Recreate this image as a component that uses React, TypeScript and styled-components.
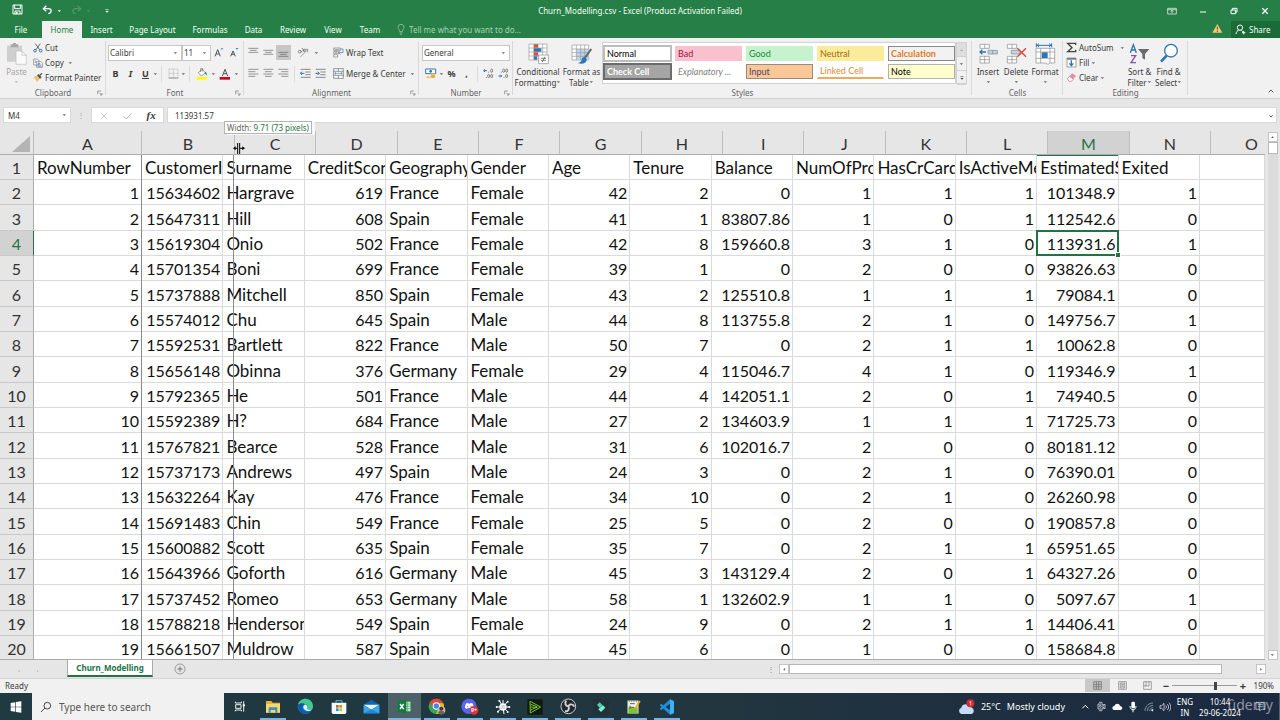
import React from "react";
import styled, { createGlobalStyle, css } from "styled-components";

const green = "#267f46";
const uiFont = `"Noto Sans", "Open Sans", sans-serif`;
const cellFont = `Lato, "Open Sans", sans-serif`;

const GlobalStyle = createGlobalStyle`
  * { box-sizing: border-box; }
  body { margin: 0; font-family: ${uiFont}; font-size: 8px; color: #3a3a3a; background: #e6e6e6; }
  button, input, select { font: inherit; color: inherit; }
  button { border: 0; padding: 0; background: none; cursor: pointer; }
`;

const Shell = styled.div`
  display: flex;
  flex-direction: column;
  height: 100vh;
  overflow: hidden;
`;

/* ---------- title bar and tabs ---------- */
const TitleBar = styled.header`
  display: grid;
  grid-template-columns: 1fr auto 1fr;
  align-items: center;
  height: 21px;
  background: ${green};
  color: #f2fff5;
`;
const QuickAccess = styled.div`
  display: flex;
  align-items: center;
  gap: 4px;
  padding-left: 12px;
`;
const Space = styled.span<{ $wide: number }>`
  width: ${(p) => p.$wide}px;
`;
const Title = styled.h1`
  margin: 0;
  font-size: 8px;
  font-weight: 400;
  white-space: nowrap;
`;
const WindowButtons = styled.div`
  display: flex;
  justify-content: flex-end;
`;
const WindowButton = styled.button`
  display: grid;
  place-items: center;
  width: 31px;
  height: 21px;
`;
const TabBar = styled.nav`
  display: flex;
  align-items: stretch;
  height: 17px;
  background: ${green};
  color: #f2fff5;
`;
const Tab = styled.button<{ $active?: boolean; $wide: number }>`
  width: ${(p) => p.$wide}px;
  line-height: 17px;
  white-space: nowrap;
  ${(p) => p.$active && css`background: #f1f1f1; color: ${green};`}
`;
const TellMe = styled.label`
  display: flex;
  align-items: center;
  gap: 4px;
  flex: 1;
  padding-left: 8px;
  color: #a6d3b4;
`;
const TellMeInput = styled.input`
  width: 160px;
  padding: 0;
  border: 0;
  outline: 0;
  background: none;
  &::placeholder { color: #a6d3b4; opacity: 1; }
`;
const ShareButton = styled.button`
  display: flex;
  align-items: center;
  gap: 3px;
  width: 49px;
  margin-left: 8px;
  padding-left: 4px;
  background: #1a6b37;
`;

/* ---------- ribbon ---------- */
const Ribbon = styled.section`
  display: flex;
  height: 61px;
  background: #f1f1f1;
  border-bottom: 1px solid #d2d2d2;
`;
const GroupBox = styled.section<{ $wide: number }>`
  display: flex;
  flex-direction: column;
  width: ${(p) => p.$wide}px;
  flex: none;
  padding-top: 2px;
  background: linear-gradient(#d8d8d8, #d8d8d8) right 3px / 1px 54px no-repeat;
`;
const GroupBody = styled.div`
  display: flex;
  height: 48px;
`;
const GroupLabel = styled.footer`
  display: grid;
  grid-template-columns: 12px 1fr 12px;
  align-items: center;
  text-align: center;
  line-height: 11px;
  color: #666;
`;
const Stack = styled.div<{ $left?: number }>`
  display: flex;
  flex-direction: column;
  padding-left: ${(p) => p.$left ?? 0}px;
`;
const ToolRow = styled.div`
  display: flex;
  align-items: center;
  height: 21px;
`;
const TallRows = styled(Stack)`
  padding-top: 2px;
`;
const LabelButton = styled.button`
  display: flex;
  align-items: center;
  gap: 2px;
  height: 15px;
  white-space: nowrap;
`;
const IconButton = styled.button<{ $wide?: number; $on?: boolean }>`
  display: grid;
  place-items: center;
  width: ${(p) => p.$wide ?? 15}px;
  height: 15px;
  flex: none;
  background: ${(p) => (p.$on ? "#c6c6c6" : "none")};
`;
const GlyphButton = styled(IconButton)`
  font-size: 9px;
  line-height: 15px;
  font-weight: 700;
`;
const FunctionButton = styled(GlyphButton)`
  font-family: "Liberation Serif", serif;
  font-size: 11px;
  font-style: italic;
`;
const BigButton = styled.button<{ $wide: number; $dim?: boolean }>`
  display: flex;
  flex-direction: column;
  align-items: center;
  width: ${(p) => p.$wide}px;
  padding-top: 1px;
  line-height: 11px;
  white-space: nowrap;
  color: ${(p) => (p.$dim ? "#a3a3a3" : "inherit")};
`;
const BigIcon = styled.span`
  display: grid;
  place-items: center;
  height: 25px;
`;
const BigLine = styled.span`
  display: flex;
  align-items: center;
  justify-content: center;
  height: 10px;
`;
const Rule = styled.span`
  width: 1px;
  height: 16px;
  margin: 0 3px;
  background: #dcdcdc;
`;
const SelectWrap = styled.span<{ $wide: number }>`
  display: grid;
  grid-template-columns: 1fr 8px;
  align-items: center;
  width: ${(p) => p.$wide}px;
  height: 16px;
  border: 1px solid #c6c6c6;
  background: #fff;
`;
const SelectBox = styled.select`
  grid-area: 1 / 1 / 2 / 3;
  width: 100%;
  height: 14px;
  padding: 0 1px;
  border: 0;
  appearance: none;
  background: none;
`;
const CaretSlot = styled.span`
  grid-area: 1 / 2;
  display: grid;
  pointer-events: none;
`;
const Gallery = styled.div`
  display: grid;
  grid-template-columns: repeat(5, 67px);
  grid-auto-rows: 15px;
  gap: 3px 4px;
  width: 354px;
  height: 42px;
  margin-top: 2px;
  padding: 3px 1px;
  background: #fff;
  border: 1px solid #d2d2d2;
`;
type ChipLook = { $bg?: string; $fg?: string; $edge?: string; $bold?: boolean; $italic?: boolean; $under?: boolean; $picked?: boolean };
const StyleChip = styled.button<ChipLook>`
  padding: 0 2px;
  overflow: hidden;
  text-align: left;
  line-height: 12px;
  white-space: nowrap;
  font-size: 9px;
  font-family: ${cellFont};
  background: ${(p) => p.$bg ?? "#fff"};
  color: ${(p) => p.$fg ?? "#000"};
  border: 1px solid ${(p) => p.$edge ?? "transparent"};
  font-weight: ${(p) => (p.$bold ? 700 : 400)};
  font-style: ${(p) => (p.$italic ? "italic" : "normal")};
  ${(p) => p.$under && css`border-bottom: 2px solid #f0a860;`}
  ${(p) => p.$picked && css`outline: 1px solid ${p.$edge};`}
`;
const GalleryScroll = styled.div`
  display: grid;
  grid-template-rows: repeat(3, 14px);
  width: 11px;
  margin-top: 2px;
  border: 1px solid #d2d2d2;
  height: 42px;
  > button { display: grid; place-items: center; border-bottom: 1px solid #d2d2d2; }
  > button:first-child { background: #dedede; }
`;
const CollapseArea = styled.div`
  display: flex;
  flex: 1;
  justify-content: flex-end;
  align-items: flex-end;
  padding-right: 4px;
`;

/* ---------- formula bar ---------- */
const FormulaBar = styled.section`
  display: flex;
  align-items: flex-start;
  height: 32px;
  padding: 8px 3px 0;
  background: #e6e6e6;
`;
const NameBox = styled.label`
  display: flex;
  align-items: center;
  width: 68px;
  height: 16px;
  padding: 0 3px 0 4px;
  background: #fff;
  border: 1px solid #d9d9d9;
`;
const PlainInput = styled.input`
  flex: 1;
  min-width: 0;
  padding: 0;
  border: 0;
  outline: 0;
  background: none;
`;
const Dots = styled.span`
  width: 20px;
  text-align: center;
  line-height: 15px;
  color: #999;
`;
const FormulaTools = styled.div`
  display: flex;
  justify-content: space-around;
  width: 73px;
  height: 16px;
  margin-right: 3px;
  background: #fff;
  border: 1px solid #d9d9d9;
`;
const FormulaField = styled.label`
  display: flex;
  align-items: center;
  flex: 1;
  height: 16px;
  padding: 0 2px 0 7px;
  background: #fff;
  border: 1px solid #d9d9d9;
`;

/* ---------- sheet ---------- */
const SheetArea = styled.main`
  display: flex;
  flex: 1;
  min-height: 0;
  background: #e6e6e6;
`;
const Sheet = styled.div`
  position: relative;
  flex: 1;
  min-width: 0;
  overflow: hidden;
  border-bottom: 1px solid #ababab;
  font-family: ${cellFont};
  font-size: 16px;
`;
const Grid = styled.table`
  width: 100%;
  table-layout: fixed;
  border-collapse: separate;
  border-spacing: 0;
`;
const ColHead = styled.th<{ $on?: boolean }>`
  height: 24px;
  padding: 2px 0 0;
  overflow: hidden;
  line-height: 21px;
  font-weight: 400;
  color: ${(p) => (p.$on ? "#217346" : "#333")};
  background: ${(p) => (p.$on ? "#d2d2d2" : "#e6e6e6")};
  border-right: 1px solid #bdbdbd;
  border-bottom: 1px solid #ababab;
  &:last-child { padding-left: 27px; border-right: 0; }
`;
const Corner = styled(ColHead)`
  padding: 0;
  > svg { display: block; margin: 3px 2px 0 auto; }
`;
const BodyRow = styled.tr`
  height: 25px;
  &:nth-child(3n) { height: 26px; }
`;
const RowHead = styled.th<{ $on?: boolean }>`
  padding: 2px 0 0;
  line-height: 22px;
  font-weight: 400;
  color: ${(p) => (p.$on ? "#217346" : "#333")};
  background: ${(p) => (p.$on ? "#d2d2d2" : "#e6e6e6")};
  border-right: 1px solid ${(p) => (p.$on ? "#217346" : "#ababab")};
  border-bottom: 1px solid #c9c9c9;
`;
const Cell = styled.td<{ $num?: boolean; $marked?: boolean }>`
  padding: 2px 2px 0 3px;
  overflow: hidden;
  white-space: nowrap;
  font-size: ${(p) => (p.$num ? 16 : 17)}px;
  line-height: 22px;
  color: #111;
  text-align: ${(p) => (p.$num ? "right" : "left")};
  background: #fff;
  border-right: 1px solid #dadada;
  border-bottom: 1px solid #dadada;
  ${(p) => p.$marked && css`box-shadow: inset 0 1px 0 #217346;`}
`;
const ActiveCell = styled(Cell)`
  position: relative;
  overflow: visible;
  &::before {
    content: "";
    position: absolute;
    inset: -1px -1px -1px -1px;
    border: 2px solid #217346;
  }
  &::after {
    content: "";
    position: absolute;
    right: -2px;
    bottom: -2px;
    width: 4px;
    height: 4px;
    background: #217346;
    outline: 1px solid #fff;
  }
`;
const Guide = styled.span<{ $x: number }>`
  position: absolute;
  left: ${(p) => p.$x}px;
  top: 24px;
  bottom: 0;
  width: 1px;
  background: #8a8a8a;
`;
const Pointer = styled.svg`
  position: absolute;
  left: 233px;
  top: 12px;
`;
const WidthTip = styled.div`
  position: absolute;
  z-index: 1;
  left: 224px;
  top: 121px;
  padding: 0 2px;
  line-height: 11px;
  white-space: nowrap;
  background: #fff;
  border: 1px solid #b5b5b5;
  box-shadow: 3px 1px 0 #f7f7f7;
  color: #666;
  > b { font-weight: 400; color: #217346; }
`;
const VScroll = styled.div`
  display: flex;
  flex-direction: column;
  align-items: center;
  width: 15px;
  padding: 1px 0 0;
`;
const ScrollButton = styled.button`
  display: grid;
  place-items: center;
  flex: none;
  width: 10px;
  height: 10px;
  background: #fff;
  border: 1px solid #c4c4c4;
`;
const VTrack = styled.div`
  flex: 1;
  width: 10px;
  background: #dcdcdc;
`;
const VThumb = styled.div`
  height: 12px;
  background: #fff;
  border: 1px solid #b8b8b8;
`;

/* ---------- sheet tabs and status ---------- */
const SheetBar = styled.nav`
  display: flex;
  align-items: center;
  height: 19px;
  background: #e6e6e6;
  border-bottom: 1px solid #d2d2d2;
`;
const SheetArrows = styled.div`
  display: flex;
  justify-content: space-around;
  width: 67px;
  padding: 0 20px 0 10px;
`;
const SheetTab = styled.button`
  align-self: flex-start;
  width: 86px;
  height: 17px;
  background: #fff;
  border: 1px solid #ababab;
  border-top: 0;
  border-bottom: 2px solid #217346;
  color: #217346;
  font-weight: 700;
`;
const AddSheet = styled.button`
  display: grid;
  margin-left: 21px;
`;
const HScroll = styled.div`
  display: flex;
  flex: none;
  align-items: center;
  width: 39%;
  margin: 0 14px 0 auto;
`;
const Grip = styled.span`
  width: 12px;
  line-height: 10px;
  color: #888;
`;
const HTrack = styled.div`
  flex: 1;
  padding-right: 34px;
`;
const HThumb = styled.div`
  height: 10px;
  background: #fff;
  border: 1px solid #b8b8b8;
`;
const StatusBar = styled.footer`
  display: flex;
  align-items: center;
  height: 14px;
  padding: 0 6px 1px 5px;
  background: #f1f1f1;
`;
const StatusTools = styled.div`
  display: flex;
  align-items: center;
  margin-left: auto;
`;
const ViewButton = styled.button<{ $on?: boolean }>`
  display: grid;
  place-items: center;
  width: 25px;
  height: 13px;
  background: ${(p) => (p.$on ? "#c9c9c9" : "none")};
`;
const ZoomStep = styled.button`
  width: 12px;
  font-size: 11px;
  line-height: 12px;
  font-weight: 700;
`;
const ZoomRange = styled.input`
  width: 65px;
  height: 12px;
  margin: 0;
  appearance: none;
  background: linear-gradient(#9a9a9a, #9a9a9a) center / 100% 1px no-repeat;
  &::-webkit-slider-thumb { appearance: none; width: 3px; height: 8px; background: #444; }
`;
const ZoomValue = styled.span`
  width: 25px;
  text-align: right;
`;

/* ---------- taskbar ---------- */
const Taskbar = styled.footer`
  display: flex;
  height: 27px;
  background: linear-gradient(90deg, #203a41, #21363f 55%, #1b2942);
  color: #fff;
`;
const StartButton = styled.button`
  display: grid;
  place-items: center;
  width: 32px;
`;
const SearchBox = styled.label`
  display: flex;
  align-items: center;
  gap: 7px;
  width: 192px;
  padding-left: 8px;
  background: #f1f1f1;
  color: #444;
  font-size: 10px;
`;
const SearchInput = styled(PlainInput)`
  &::placeholder { color: #555; opacity: 1; }
`;
const TaskIcons = styled.div`
  display: flex;
  width: 459px;
`;
const TaskButton = styled.button<{ $open?: boolean; $on?: boolean }>`
  display: grid;
  place-items: center;
  flex: 1;
  background: ${(p) => (p.$on ? "#4c6168" : "none")};
  ${(p) => p.$open && css`
    background-image: linear-gradient(#79b4e2, #79b4e2);
    background-size: ${p.$on ? "100%" : "26px"} 2px;
    background-position: center bottom;
    background-repeat: no-repeat;
  `}
`;
const Tray = styled.div`
  position: relative;
  display: flex;
  align-items: center;
  margin-left: auto;
  padding-right: 2px;
  border-right: 1px solid #55616f;
`;
const Weather = styled.button`
  display: flex;
  align-items: center;
  gap: 6px;
  margin-right: 12px;
  font-size: 9px;
  white-space: nowrap;
`;
const TrayButton = styled.button`
  display: grid;
  place-items: center;
  width: 16px;
  height: 27px;
`;
const TrayText = styled.div<{ $wide: number }>`
  width: ${(p) => p.$wide}px;
  text-align: center;
  line-height: 11px;
  white-space: nowrap;
`;
const NoticeButton = styled(TrayButton)`
  width: 34px;
`;
const Watermark = styled.span`
  position: absolute;
  right: 6px;
  top: 2px;
  font-size: 14px;
  line-height: 20px;
  color: rgba(255, 255, 255, 0.5);
`;

/* ---------- icons ---------- */
type DrawProps = { w: number; h: number; children: React.ReactNode };
/* Icons are drawn on a canvas three times as fine as the screen. */
const Draw = ({ w, h, children }: DrawProps) => (
  <svg width={Math.round(w / 3)} height={Math.round(h / 3)} viewBox={`0 0 ${w} ${h}`} fill="none" aria-hidden="true">
    {children}
  </svg>
);
const Caret = ({ color = "#666" }: { color?: string }) => (
  <Draw w={15} h={12}><path d="M2 4h10l-5 5z" fill={color} /></Draw>
);
const Launcher = () => (
  <Draw w={18} h={18}><path d="M2 13V3h10M7 8l7 7M15 9v6H9" stroke="#777" strokeWidth="2" /></Draw>
);
const AlignLines = ({ rows, widths }: { rows: number[]; widths: [number, number][] }) => (
  <Draw w={33} h={33}>
    {rows.map((y, i) => <path key={y} d={`M${widths[i][0]} ${y}H${widths[i][1]}`} stroke="#666" strokeWidth="2" />)}
  </Draw>
);
const full: [number, number] = [1, 31];
const mid: [number, number] = [6, 26];
const DecimalIcon = ({ more }: { more?: boolean }) => (
  <Draw w={33} h={33}>
    <path d={more ? "M2 8h10M6 4 2 8l4 4" : "M1 24h10M7 20l4 4-4 4"} stroke="#2e75b6" strokeWidth="3" />
    <g stroke="#555" strokeWidth="2">
      <ellipse cx="26" cy="8" rx="3" ry="5" />
      <ellipse cx="26" cy="24" rx="3" ry="5" />
      <ellipse cx="17" cy={more ? 24 : 8} rx="3" ry="5" />
      <path d={more ? "M17 11v3M10 27v3" : "M10 11v3M18 27v3"} />
    </g>
  </Draw>
);
const IndentIcon = ({ flip }: { flip?: boolean }) => (
  <Draw w={33} h={33}>
    <path d="M2 4h30M16 12h16M16 20h16M2 28h30" stroke="#8a8a8a" strokeWidth="3" />
    <path d={flip ? "M1 16h12M8 11l5 5-5 5" : "M13 16H1M6 11l-5 5 5 5"} stroke="#2e75b6" strokeWidth="3" />
  </Draw>
);
const UndoIcon = ({ flip, dim }: { flip?: boolean; dim?: boolean }) => (
  <Draw w={33} h={30}>
    <g transform={flip ? "matrix(-1 0 0 1 33 0)" : undefined} stroke={dim ? "#4d9a67" : "#fff"} strokeWidth="4">
      <path d="M4 11h15c7 0 10 4 8 9-1 3-4 5-8 6" />
      <path d="M13 2 4 11l9 8" />
    </g>
  </Draw>
);

const QuickTools = () => (
  <QuickAccess>
    <button aria-label="Save">
      <Draw w={33} h={33}><path d="M3 3h27v27H3zM8 3v11h17V3M9 30V21h15v9" stroke="#fff" strokeWidth="3" /><path d="M12 24h5v6h-5z" fill="#fff" /></Draw>
    </button>
    <Space $wide={11} />
    <button aria-label="Undo"><UndoIcon /></button>
    <Caret color="#fff" />
    <Space $wide={1} />
    <button aria-label="Redo"><UndoIcon flip dim /></button>
    <Caret color="#4d9a67" />
    <Space $wide={5} />
    <button aria-label="Customize toolbar">
      <Draw w={18} h={18}><path d="M4 5h10" stroke="#fff" strokeWidth="2" /><path d="M4 9h10l-5 5z" fill="#fff" /></Draw>
    </button>
  </QuickAccess>
);

const tabs: [string, number][] = [
  ["File", 42], ["Home", 40], ["Insert", 39], ["Page Layout", 63], ["Formulas", 52],
  ["Data", 35], ["Review", 44], ["View", 36], ["Team", 38],
];

const Group = ({ name, wide, launcher, children }: { name: string; wide: number; launcher?: boolean; children: React.ReactNode }) => (
  <GroupBox $wide={wide} aria-label={name}>
    <GroupBody>{children}</GroupBody>
    <GroupLabel>
      <span />
      <span>{name}</span>
      {launcher ? <button aria-label={`${name} settings`}><Launcher /></button> : <span />}
    </GroupLabel>
  </GroupBox>
);
const Dropdown = ({ label, wide, value }: { label: string; wide: number; value: string }) => (
  <SelectWrap $wide={wide}>
    <SelectBox aria-label={label} defaultValue={value}><option>{value}</option></SelectBox>
    <CaretSlot><Caret /></CaretSlot>
  </SelectWrap>
);

const chips: ({ name: string } & ChipLook)[] = [
  { name: "Normal", $picked: true, $edge: "#bdbdbd" },
  { name: "Bad", $bg: "#f9c0cd", $fg: "#a3123a" },
  { name: "Good", $bg: "#c6f3cd", $fg: "#1e8a34" },
  { name: "Neutral", $bg: "#fbec9b", $fg: "#9c6b10" },
  { name: "Calculation", $bg: "#f2f2f2", $fg: "#e07b1e", $edge: "#8a8a8a", $bold: true },
  { name: "Check Cell", $bg: "#a5a5a5", $fg: "#fff", $edge: "#6b6b6b", $bold: true, $picked: true },
  { name: "Explanatory ...", $fg: "#7f7f7f", $italic: true },
  { name: "Input", $bg: "#fac898", $fg: "#4b4468", $edge: "#9a8a7a" },
  { name: "Linked Cell", $fg: "#e5883a", $under: true },
  { name: "Note", $bg: "#feffcc", $edge: "#b2b2b2" },
];

const RibbonPanel = () => (
  <Ribbon>
    <Group name="Clipboard" wide={106} launcher>
      <BigButton $wide={33} $dim>
        <BigIcon>
          <Draw w={63} h={66}>
            <path d="M3 8h45v48H3z" fill="#cfcfcf" />
            <path d="M14 4h6l2-4h7l2 4h6v9H14z" fill="#a8a8a8" />
            <path d="M30 24h18l13 13v27H30z" fill="#fafafa" stroke="#bdbdbd" strokeWidth="2" />
            <path d="M48 24v13h13" stroke="#bdbdbd" strokeWidth="2" />
          </Draw>
        </BigIcon>
        <span>Paste</span>
        <BigLine><Caret color="#b5b5b5" /></BigLine>
      </BigButton>
      <Stack>
        <LabelButton>
          <Draw w={30} h={30}><path d="M7 2l13 18M22 2 9 20" stroke="#666" strokeWidth="3" /><circle cx="6" cy="23" r="4" stroke="#2e75b6" strokeWidth="3" /><circle cx="23" cy="23" r="4" stroke="#2e75b6" strokeWidth="3" /></Draw>
          Cut
        </LabelButton>
        <LabelButton>
          <Draw w={30} h={30}><path d="M2 3h11l5 5v13H2zM11 10h12l5 5v13H11z" fill="#fff" stroke="#777" strokeWidth="2" /><path d="M14 17h8M14 21h11M14 25h11M5 9h5M5 13h5" stroke="#2e75b6" strokeWidth="2" /></Draw>
          Copy <span /><Caret />
        </LabelButton>
        <LabelButton>
          <Draw w={30} h={30}><path d="M2 12 12 7l8 10-8 10z" fill="#f0c36c" /><path d="m12 7 5-4 9 10-5 5z" fill="#555" /><path d="m21 7 6-6" stroke="#555" strokeWidth="4" /></Draw>
          Format Painter
        </LabelButton>
      </Stack>
    </Group>

    <Group name="Font" wide={138} launcher>
      <TallRows $left={2}>
        <ToolRow>
          <Dropdown label="Font" wide={74} value="Calibri" />
          <Dropdown label="Font size" wide={29} value="11" />
          <IconButton aria-label="Increase font size">
            <Draw w={30} h={33}><path d="M3 28 11 8l8 20M6 21h10" stroke="#555" strokeWidth="3" /><path d="M20 7h8l-4-5z" fill="#2e75b6" /></Draw>
          </IconButton>
          <IconButton aria-label="Decrease font size">
            <Draw w={30} h={33}><path d="m5 28 7-16 7 16M8 22h8" stroke="#555" strokeWidth="3" /><path d="M20 3h8l-4 5z" fill="#2e75b6" /></Draw>
          </IconButton>
        </ToolRow>
        <ToolRow>
          <GlyphButton>B</GlyphButton>
          <GlyphButton><i>I</i></GlyphButton>
          <GlyphButton><u>U</u></GlyphButton>
          <Caret />
          <Rule />
          <IconButton aria-label="Borders" $wide={16}>
            <Draw w={33} h={33}><path d="M3 3h27v27H3zM16 3v27M3 16h27" stroke="#aaa" strokeWidth="2" strokeDasharray="3 2" /><path d="M2 30h29" stroke="#777" strokeWidth="2" /></Draw>
          </IconButton>
          <Caret />
          <Rule />
          <IconButton aria-label="Fill color" $wide={18}>
            <Draw w={36} h={36}><path d="m7 14 12-10 9 11-12 9z" fill="#fff" stroke="#666" strokeWidth="2" /><path d="M14 12V2h6v8" stroke="#666" strokeWidth="2" /><path d="M27 11c6 2 6 7 5 12l-5-7z" fill="#2e75b6" /><path d="M2 27h31v8H2z" fill="#ffff00" /></Draw>
          </IconButton>
          <Caret />
          <IconButton aria-label="Font color" $wide={18}>
            <Draw w={36} h={36}><path d="M10 24 18 4l8 20M13 17h10" stroke="#555" strokeWidth="3" /><path d="M2 27h31v8H2z" fill="#d0021b" /></Draw>
          </IconButton>
          <Caret />
        </ToolRow>
      </TallRows>
    </Group>

    <Group name="Alignment" wide={175} launcher>
      <TallRows $left={2}>
        <ToolRow>
          <IconButton aria-label="Top align"><AlignLines rows={[4, 10, 16]} widths={[full, mid, full]} /></IconButton>
          <IconButton aria-label="Middle align"><AlignLines rows={[10, 16, 22]} widths={[full, mid, full]} /></IconButton>
          <IconButton aria-label="Bottom align" $on><AlignLines rows={[16, 22, 28]} widths={[full, mid, full]} /></IconButton>
          <IconButton aria-label="Orientation" $wide={23}>
            <Draw w={36} h={33}><path d="M10 30 32 8M32 16V7h-9" stroke="#777" strokeWidth="2" /><circle cx="8" cy="14" r="4" stroke="#555" strokeWidth="2" /><path d="m11 10 4 6M15 3l7 12" stroke="#555" strokeWidth="2" /><circle cx="22" cy="10" r="3" stroke="#555" strokeWidth="2" /></Draw>
          </IconButton>
          <Caret />
        </ToolRow>
        <ToolRow>
          <IconButton aria-label="Align left"><AlignLines rows={[4, 11, 18, 25]} widths={[full, [1, 22], full, [1, 22]]} /></IconButton>
          <IconButton aria-label="Center"><AlignLines rows={[4, 11, 18, 25]} widths={[full, mid, full, mid]} /></IconButton>
          <IconButton aria-label="Align right"><AlignLines rows={[4, 11, 18, 25]} widths={[full, [10, 31], full, [10, 31]]} /></IconButton>
          <Rule />
          <IconButton aria-label="Decrease indent"><IndentIcon /></IconButton>
          <IconButton aria-label="Increase indent"><IndentIcon flip /></IconButton>
        </ToolRow>
      </TallRows>
      <TallRows $left={5}>
        <ToolRow>
          <LabelButton>
            <Draw w={33} h={33}><path d="M2 3h20v7H2zM2 13h14v7H2zM2 23h12v7H2z" fill="#fff" stroke="#777" strokeWidth="2" /><path d="M5 7h14M5 16h8" stroke="#777" strokeWidth="2" /><path d="M22 6h8v11H18M22 12l-5 5 5 5" stroke="#2e75b6" strokeWidth="2" /></Draw>
            Wrap Text
          </LabelButton>
        </ToolRow>
        <ToolRow>
          <LabelButton>
            <Draw w={33} h={33}><path d="M2 2h29v29H2zM2 10h29M2 22h29M16 2v8M16 22v9" fill="#fff" stroke="#666" strokeWidth="2" /><path d="M6 16h21M9 13l-4 3 4 3M24 13l4 3-4 3" stroke="#2e75b6" strokeWidth="2" /></Draw>
            Merge &amp; Center <span /><Caret />
          </LabelButton>
        </ToolRow>
      </TallRows>
    </Group>

    <Group name="Number" wide={94} launcher>
      <TallRows $left={3}>
        <ToolRow><Dropdown label="Number format" wide={88} value="General" /></ToolRow>
        <ToolRow>
          <IconButton aria-label="Accounting format" $wide={17}>
            <Draw w={36} h={33}><path d="M2 3h30v14H2z" fill="#fff" stroke="#2e75b6" strokeWidth="3" /><circle cx="17" cy="10" r="4" fill="#2e75b6" /><ellipse cx="24" cy="20" rx="7" ry="4" fill="#f0c36c" /><ellipse cx="24" cy="26" rx="7" ry="4" fill="#e0a840" /><ellipse cx="10" cy="28" rx="7" ry="3" fill="#f0c36c" /></Draw>
          </IconButton>
          <Caret />
          <GlyphButton>%</GlyphButton>
          <GlyphButton>,</GlyphButton>
          <Rule />
          <IconButton aria-label="Increase decimal"><DecimalIcon more /></IconButton>
          <IconButton aria-label="Decrease decimal"><DecimalIcon /></IconButton>
        </ToolRow>
      </TallRows>
    </Group>

    <Group name="Styles" wide={459}>
      <Space $wide={2} />
      <BigButton $wide={46}>
        <BigIcon>
          <Draw w={63} h={66}>
            <path d="M3 3h54v48H3z" fill="#fff" stroke="#999" strokeWidth="2" />
            <path d="M17 3v48M30 3v48M44 3v48M3 15h54M3 27h54M3 39h54" stroke="#999" strokeWidth="2" />
            <path d="M18 4h12v10H18zM18 28h12v10H18z" fill="#d9513c" /><path d="M18 16h22v10H18zM18 40h9v10h-9z" fill="#2e75b6" />
            <path d="M32 36h29v26H32z" fill="#fff" stroke="#888" strokeWidth="2" />
            <path d="M39 46h15M39 52h15M51 41l-8 16" stroke="#444" strokeWidth="2" />
          </Draw>
        </BigIcon>
        <span>Conditional</span>
        <BigLine>Formatting<Caret /></BigLine>
      </BigButton>
      <BigButton $wide={41}>
        <BigIcon>
          <Draw w={63} h={66}>
            <path d="M3 6h50v45H3z" fill="#fff" stroke="#999" strokeWidth="2" />
            <path d="M16 18h37v33H16z" fill="#bcd3ea" />
            <path d="M16 6v45M29 6v45M41 6v45M3 18h50M3 29h50M3 40h50" stroke="#999" strokeWidth="2" />
            <path d="M61 18 42 44" stroke="#666" strokeWidth="6" />
            <path d="M42 42c-8-1-10 6-11 11-2 4-6 6-11 7 14 5 28 1 27-12z" fill="#2e75b6" />
          </Draw>
        </BigIcon>
        <span>Format as</span>
        <BigLine>Table<Caret /></BigLine>
      </BigButton>
      <Gallery>
        {chips.map(({ name, ...look }) => <StyleChip key={name} {...look}>{name}</StyleChip>)}
      </Gallery>
      <GalleryScroll>
        <button aria-label="Previous styles"><Draw w={15} h={12}><path d="M3 9h9L8 4z" fill="#aaa" /></Draw></button>
        <button aria-label="Next styles"><Caret /></button>
        <button aria-label="More styles"><Draw w={18} h={18}><path d="M4 5h10" stroke="#555" strokeWidth="2" /><path d="M4 9h10l-5 5z" fill="#555" /></Draw></button>
      </GalleryScroll>
    </Group>

    <Group name="Cells" wide={91}>
      <Space $wide={2} />
      <BigButton $wide={28}>
        <BigIcon>
          <Draw w={60} h={63}>
            <path d="M6 4h28v12H6zM20 4v12M6 40h28v20H6zM20 40v20M6 50h28" fill="#fff" stroke="#888" strokeWidth="2" />
            <path d="M30 22h28v11H30zM44 22v11" fill="#bcd3ea" stroke="#888" strokeWidth="2" />
            <path d="M24 27H6M13 20l-7 7 7 7" stroke="#2e75b6" strokeWidth="4" />
          </Draw>
        </BigIcon>
        <span>Insert</span>
        <BigLine><Caret /></BigLine>
      </BigButton>
      <BigButton $wide={28}>
        <BigIcon>
          <Draw w={63} h={63}>
            <path d="M4 4h28v12H4zM18 4v12M4 40h28v20H4zM18 40v20M4 50h28" fill="#fff" stroke="#888" strokeWidth="2" />
            <path d="M16 22h26v11H16z" fill="#bcd3ea" stroke="#888" strokeWidth="2" />
            <path d="m34 16 26 25M60 16 34 41" stroke="#d9442e" strokeWidth="4" />
          </Draw>
        </BigIcon>
        <span>Delete</span>
        <BigLine><Caret /></BigLine>
      </BigButton>
      <BigButton $wide={30}>
        <BigIcon>
          <Draw w={63} h={66}>
            <path d="M4 7h46M4 1v12M50 1v12M12 2 6 7l6 5M42 2l6 5-6 5" stroke="#2e75b6" strokeWidth="3" />
            <path d="M3 16h56v44H45l-6 4-8-4H3zM17 16v44M45 16v44M3 27h56M3 46h56" fill="#fff" stroke="#888" strokeWidth="2" />
            <path d="M20 28h18v17H20z" fill="#2e75b6" />
          </Draw>
        </BigIcon>
        <span>Format</span>
        <BigLine><Caret /></BigLine>
      </BigButton>
    </Group>

    <Group name="Editing" wide={125}>
      <Stack $left={3}>
        <LabelButton>
          <Draw w={33} h={33}><path d="M29 9V4H5l13 13L5 29h24v-6" stroke="#444" strokeWidth="4" /></Draw>
          AutoSum <span /><span /><Caret />
        </LabelButton>
        <LabelButton>
          <Draw w={33} h={33}><path d="M3 3h27v27H3z" fill="#fff" stroke="#777" strokeWidth="2" /><path d="M3 3h27v5H3z" fill="#777" /><path d="M16 10v16M10 19l6 7 6-7" stroke="#2e75b6" strokeWidth="4" /></Draw>
          Fill<Caret />
        </LabelButton>
        <LabelButton>
          <Draw w={33} h={33}><path d="M4 20 19 4l11 8-14 16H9z" fill="#e58fa5" /><path d="m4 20 7-7 11 9-6 6H9z" fill="#fff" stroke="#d06a86" strokeWidth="2" /></Draw>
          Clear<Caret />
        </LabelButton>
      </Stack>
      <BigButton $wide={30}>
        <BigIcon>
          <Draw w={66} h={66}>
            <path d="m4 29 9-24 9 24M7 21h12" stroke="#2e75b6" strokeWidth="4" />
            <path d="M6 38h14L6 59h15" stroke="#8a4fb5" strokeWidth="4" />
            <path d="M27 18h34L48 33v17l-8-5V33z" fill="#6a6a6a" />
          </Draw>
        </BigIcon>
        <span>Sort &amp;</span>
        <BigLine>Filter<Caret /></BigLine>
      </BigButton>
      <BigButton $wide={28}>
        <BigIcon>
          <Draw w={60} h={63}><circle cx="36" cy="23" r="19" fill="#fff" stroke="#2e75b6" strokeWidth="4" /><path d="M23 38 6 56" stroke="#2e75b6" strokeWidth="8" /></Draw>
        </BigIcon>
        <span>Find &amp;</span>
        <BigLine>Select<Caret /></BigLine>
      </BigButton>
    </Group>
    <CollapseArea>
      <button aria-label="Collapse the ribbon"><Draw w={30} h={27}><path d="m8 16 7-7 7 7" stroke="#555" strokeWidth="3" /></Draw></button>
    </CollapseArea>
  </Ribbon>
);

/* ---------- data ---------- */
const letters = "ABCDEFGHIJKLMNO".split("");
const heads = ["RowNumber", "CustomerId", "Surname", "CreditScore", "Geography", "Gender", "Age", "Tenure", "Balance", "NumOfProducts", "HasCrCard", "IsActiveMember", "EstimatedSalary", "Exited", ""];
const textColumns = new Set([2, 4, 5]);
const records = `1,15634602,Hargrave,619,France,Female,42,2,0,1,1,1,101348.9,1
2,15647311,Hill,608,Spain,Female,41,1,83807.86,1,0,1,112542.6,0
3,15619304,Onio,502,France,Female,42,8,159660.8,3,1,0,113931.6,1
4,15701354,Boni,699,France,Female,39,1,0,2,0,0,93826.63,0
5,15737888,Mitchell,850,Spain,Female,43,2,125510.8,1,1,1,79084.1,0
6,15574012,Chu,645,Spain,Male,44,8,113755.8,2,1,0,149756.7,1
7,15592531,Bartlett,822,France,Male,50,7,0,2,1,1,10062.8,0
8,15656148,Obinna,376,Germany,Female,29,4,115046.7,4,1,0,119346.9,1
9,15792365,He,501,France,Male,44,4,142051.1,2,0,1,74940.5,0
10,15592389,H?,684,France,Male,27,2,134603.9,1,1,1,71725.73,0
11,15767821,Bearce,528,France,Male,31,6,102016.7,2,0,0,80181.12,0
12,15737173,Andrews,497,Spain,Male,24,3,0,2,1,0,76390.01,0
13,15632264,Kay,476,France,Female,34,10,0,2,1,0,26260.98,0
14,15691483,Chin,549,France,Female,25,5,0,2,0,0,190857.8,0
15,15600882,Scott,635,Spain,Female,35,7,0,2,1,1,65951.65,0
16,15643966,Goforth,616,Germany,Male,45,3,143129.4,2,0,1,64327.26,0
17,15737452,Romeo,653,Germany,Male,58,1,132602.9,1,1,0,5097.67,1
18,15788218,Henderson,549,Spain,Female,24,9,0,2,1,1,14406.41,0
19,15661507,Muldrow,587,Spain,Male,45,6,0,1,0,0,158684.8,0`
  .split("\n")
  .map((line) => [...line.split(","), ""]);

const Col = styled.col<{ $wide?: number }>`
  width: ${(p) => (p.$wide ? `${p.$wide}px` : "auto")};
`;

const SheetGrid = () => (
  <Sheet>
    <Grid aria-label="Column headings">
      <colgroup>
        <Col $wide={34} /><Col $wide={108} /><Col $wide={93} />
        <Col span={12} />
        <Col $wide={54} />
      </colgroup>
      <thead>
        <tr>
          <Corner><Draw w={60} h={54}><path d="M57 3v48H3z" fill="#b4b4b4" /></Draw></Corner>
          {letters.map((l) => <ColHead key={l} $on={l === "M"}>{l}</ColHead>)}
        </tr>
      </thead>
    </Grid>
    <Grid>
      <colgroup>
        <Col $wide={34} /><Col $wide={108} />
        <Col span={13} />
        <Col $wide={65} />
      </colgroup>
      <tbody>
        <BodyRow>
          <RowHead>1</RowHead>
          {heads.map((h, i) => <Cell key={i} $marked={i === 12}>{h}</Cell>)}
        </BodyRow>
        {records.map((rec, r) => (
          <BodyRow key={r}>
            <RowHead $on={r === 2}>{r + 2}</RowHead>
            {rec.map((v, c) =>
              r === 2 && c === 12
                ? <ActiveCell key={c} $num>{v}</ActiveCell>
                : <Cell key={c} $num={!textColumns.has(c)}>{v}</Cell>
            )}
          </BodyRow>
        ))}
      </tbody>
    </Grid>
    <Guide $x={141} />
    <Guide $x={233} />
    <Pointer width="12" height="11" viewBox="0 0 36 33" aria-hidden="true">
      <path d="M14 0v33M20 0v33M3 16h10M21 16h12" stroke="#000" strokeWidth="3" />
      <path d="m0 16 8-6v12zM36 16l-8-6v12z" fill="#000" />
    </Pointer>
  </Sheet>
);

/* ---------- taskbar icons ---------- */
const taskItems: { name: string; open?: boolean; on?: boolean; art: React.ReactNode }[] = [
  { name: "Task view", art: <Draw w={39} h={39}><path d="M4 5v4h18V5M4 34v-4h18v4M5 14h16v11H5zM29 4v31" stroke="#e8eef0" strokeWidth="3" /><path d="M26 13h7v6h-7z" fill="#e8eef0" /></Draw> },
  { name: "File Explorer", open: true, art: <Draw w={48} h={42}><path d="M3 3h16l4 5h22v30H3z" fill="#e8b13a" /><path d="M3 12h42v26H3z" fill="#ffd766" /><path d="M11 22h26v16h-6v-8H17v8h-6z" fill="#3b8fd0" /></Draw> },
  { name: "Edge", art: <Draw w={51} h={51}><circle cx="25" cy="25" r="23" fill="#1583d0" /><path d="M3 21C6 6 21-1 34 4c11 5 15 15 14 24-2 7-9 9-16 7 3-5 2-14-6-16-9-3-19-2-23 2z" fill="#45c98a" /><path d="M3 21c5-7 17-7 23-2-9 0-12 8-9 14 4 8 14 11 25 6C31 54 4 50 3 21z" fill="#0c5bab" /><path d="M22 21c6-2 12 4 9 12 4 4 10 3 14 1-6 8-18 6-23 0-4-4-4-10 0-13z" fill="#e6f5fa" /></Draw> },
  { name: "Store", art: <Draw w={48} h={48}><path d="M15 11V5h18v6" stroke="#40c0e8" strokeWidth="3" /><path d="M2 11h44v29a5 5 0 0 1-5 5H7a5 5 0 0 1-5-5z" fill="#f5f8fa" /><path d="M15 18h8v8h-8z" fill="#f25022" /><path d="M25 18h8v8h-8z" fill="#7fba00" /><path d="M15 28h8v8h-8z" fill="#00a4ef" /><path d="M25 28h8v8h-8z" fill="#ffb900" /></Draw> },
  { name: "Mail", art: <Draw w={51} h={45}><path d="M2 17 25 2l24 15v26H2z" fill="#1465b0" /><path d="M2 17h47L25 32z" fill="#e9f2f9" /><path d="m2 18 23 15 24-15v25H2z" fill="#38a8ec" /><path d="m2 43 23-12 24 12z" fill="#1f86d8" /></Draw> },
  { name: "Excel", open: true, on: true, art: <Draw w={45} h={45}><path d="M24 8h17v29H24z" fill="#dff0e4" stroke="#31a35b" strokeWidth="2" /><path d="M32 8v29M24 15h17M24 22h17M24 29h17" stroke="#31a35b" strokeWidth="2" /><path d="M2 6 28 2v41L2 39z" fill="#137a3e" /><path d="m9 15 11 15M20 15 9 30" stroke="#fff" strokeWidth="4" /></Draw> },
  { name: "Chrome", open: true, art: <Draw w={54} h={51}><circle cx="25" cy="25" r="23" fill="#35a853" /><path d="M5 14a23 23 0 0 1 41 2H25l-9 13z" fill="#e94335" /><path d="M46 16A23 23 0 0 1 24 48l11-19V16z" fill="#fbbc05" /><circle cx="25" cy="24" r="11" fill="#fff" /><circle cx="25" cy="24" r="8" fill="#4285f4" /><circle cx="40" cy="37" r="12" fill="#c9b7a5" /><circle cx="40" cy="32" r="6" fill="#4b3427" /><path d="M30 44c2-8 18-8 20 0-5 6-15 6-20 0z" fill="#6c625c" /></Draw> },
  { name: "Discord", open: true, art: <Draw w={54} h={51}><circle cx="24" cy="25" r="23" fill="#5865f2" /><path d="M12 30c0-7 2-12 4-14l6-1 1 2h4l1-2 6 1c3 4 4 9 4 14l-6 3-2-3H20l-2 3z" fill="#fff" /><circle cx="20" cy="25" r="2" fill="#5865f2" /><circle cx="30" cy="25" r="2" fill="#5865f2" /><circle cx="39" cy="37" r="13" fill="#d9343e" /><text x="39" y="43" fontSize="16" fontWeight="700" textAnchor="middle" fill="#fff">9+</text></Draw> },
  { name: "Network tool", open: true, art: <Draw w={48} h={48}><path d="M24 24 13 5M24 24V3M24 24 38 7M24 24H3M24 24h21M24 24 8 38M24 24l3 21M24 24l15 15" stroke="#fff" strokeWidth="3" /><circle cx="24" cy="24" r="11" fill="#fff" /><path d="M17 21h14M17 27h14" stroke="#84949a" strokeWidth="2" /><g fill="#fff"><circle cx="13" cy="6" r="3" /><circle cx="38" cy="8" r="3" /><circle cx="5" cy="24" r="3" /><circle cx="43" cy="24" r="3" /><circle cx="9" cy="38" r="3" /><circle cx="38" cy="39" r="3" /></g></Draw> },
  { name: "Player", open: true, art: <Draw w={48} h={48}><path d="M1 1h46v46H1z" fill="#101a10" /><path d="m9 7 32 17L10 42z" stroke="#78c52c" strokeWidth="3" /><path d="m11 16 19 7M11 24l20 1M11 33l20-9" stroke="#78c52c" strokeWidth="3" /></Draw> },
  { name: "OBS", open: true, art: <Draw w={51} h={51}><circle cx="25" cy="25" r="22" fill="#25262c" stroke="#c8cbd0" strokeWidth="3" /><path d="M25 25c-9-1-12-10-6-17M25 25c4-8 14-8 18 1M25 25c5 8-1 16-10 15" stroke="#d2d3d7" strokeWidth="6" /></Draw> },
  { name: "Filmora", open: true, art: <Draw w={48} h={48}><path d="M1 1h46v46H1z" fill="#223038" /><path d="m20 10 8 8-8 8-8-8z" fill="#42d7b2" /><path d="m29 18 8 8-13 13-8-8z" fill="#7af0d0" /></Draw> },
  { name: "Notepad++", open: true, art: <Draw w={48} h={48}><path d="M5 5h32v38H5z" fill="#f1f3ea" stroke="#a4a99c" strokeWidth="2" /><path d="M7 25h28v17H7z" fill="#79c62e" /><path d="M10 3v6M17 3v6M24 3v6M31 3v6" stroke="#777" strokeWidth="2" /><path d="M12 14h14M12 20v10M12 25h12" stroke="#53684a" strokeWidth="3" /><path d="M42 6 27 29" stroke="#f4a51c" strokeWidth="5" /></Draw> },
  { name: "VS Code", open: true, art: <Draw w={51} h={48}><path d="m36 1 12 6v35l-12 5L5 19l5-5 26 20V14L10 34l-5-5z" fill="#1b8fdc" /><path d="m36 1 12 6v35l-12 5z" fill="#3eb0f5" /></Draw> },
];

export default function App() {
  return (
    <>
      <GlobalStyle />
      <Shell>
        <TitleBar>
          <QuickTools />
          <Title>Churn_Modelling.csv - Excel (Product Activation Failed)</Title>
          <WindowButtons>
            <WindowButton aria-label="Ribbon options"><Draw w={30} h={24}><path d="M2 4h26v17H2zM2 8h26M15 19v-9M11 14l4-4 4 4" stroke="#fff" strokeWidth="2" /></Draw></WindowButton>
            <WindowButton aria-label="Minimize"><Draw w={24} h={24}><path d="M3 15h18" stroke="#fff" strokeWidth="3" /></Draw></WindowButton>
            <WindowButton aria-label="Restore"><Draw w={24} h={24}><path d="M3 9h14v11H3zM7 9V4h14v11h-4" stroke="#fff" strokeWidth="3" /></Draw></WindowButton>
            <WindowButton aria-label="Close"><Draw w={24} h={24}><path d="m4 4 16 16M20 4 4 20" stroke="#fff" strokeWidth="4" /></Draw></WindowButton>
          </WindowButtons>
        </TitleBar>
        <TabBar>
          {tabs.map(([name, wide]) => <Tab key={name} $wide={wide} $active={name === "Home"}>{name}</Tab>)}
          <TellMe>
            <Draw w={24} h={33}><path d="M8 23c0-6-5-7-5-13a9 9 0 0 1 18 0c0 6-5 7-5 13zM8 27h8M9 31h6" stroke="#a6d3b4" strokeWidth="2" /></Draw>
            <TellMeInput aria-label="Tell me what you want to do" placeholder="Tell me what you want to do..." />
          </TellMe>
          <button aria-label="Activation warning"><Draw w={33} h={33}><path d="M16 3 31 29H1z" fill="#f3c878" /><path d="M16 11v9M16 23v4" stroke="#704f14" strokeWidth="3" /></Draw></button>
          <ShareButton>
            <Draw w={33} h={33}><circle cx="15" cy="11" r="8" stroke="#fff" strokeWidth="3" /><path d="M3 30c1-7 4-10 8-11M19 19c2 1 3 2 4 4M26 21v10M21 26h10" stroke="#fff" strokeWidth="3" /></Draw>
            Share
          </ShareButton>
        </TabBar>
        <RibbonPanel />
        <FormulaBar>
          <NameBox><PlainInput aria-label="Name box" defaultValue="M4" /><Caret /></NameBox>
          <Dots>⋮</Dots>
          <FormulaTools>
            <IconButton aria-label="Cancel"><Draw w={24} h={24}><path d="m3 3 18 18M21 3 3 21" stroke="#b5b5b5" strokeWidth="2" /></Draw></IconButton>
            <IconButton aria-label="Enter"><Draw w={27} h={24}><path d="m2 13 8 8L25 4" stroke="#b5b5b5" strokeWidth="3" /></Draw></IconButton>
            <FunctionButton aria-label="Insert function">fx</FunctionButton>
          </FormulaTools>
          <FormulaField>
            <PlainInput aria-label="Formula" defaultValue="113931.57" />
            <button aria-label="Expand formula bar"><Draw w={18} h={15}><path d="m4 4 5 5 5-5" stroke="#555" strokeWidth="3" /></Draw></button>
          </FormulaField>
        </FormulaBar>
        <WidthTip role="tooltip">Width: <b>9.71 (73 pixels)</b></WidthTip>
        <SheetArea>
          <SheetGrid />
          <VScroll>
            <ScrollButton aria-label="Scroll up"><Draw w={15} h={12}><path d="M3 9h9L8 4z" fill="#666" /></Draw></ScrollButton>
            <VTrack><VThumb /></VTrack>
            <ScrollButton aria-label="Scroll down"><Caret /></ScrollButton>
          </VScroll>
        </SheetArea>
        <SheetBar>
          <SheetArrows>
            <button aria-label="Previous sheet"><Draw w={12} h={12}><path d="M8 2v8L3 6z" fill="#bbb" /></Draw></button>
            <button aria-label="Next sheet"><Draw w={12} h={12}><path d="M3 2v8l5-4z" fill="#bbb" /></Draw></button>
          </SheetArrows>
          <SheetTab>Churn_Modelling</SheetTab>
          <AddSheet aria-label="New sheet"><Draw w={36} h={36}><circle cx="18" cy="18" r="15" stroke="#777" strokeWidth="2" /><path d="M18 10v16M10 18h16" stroke="#777" strokeWidth="3" /></Draw></AddSheet>
          <HScroll>
            <Grip>⋮</Grip>
            <ScrollButton aria-label="Scroll left"><Draw w={12} h={15}><path d="M9 3v9L4 7z" fill="#666" /></Draw></ScrollButton>
            <HTrack><HThumb /></HTrack>
            <ScrollButton aria-label="Scroll right"><Draw w={12} h={15}><path d="M4 3v9l5-5z" fill="#666" /></Draw></ScrollButton>
          </HScroll>
        </SheetBar>
        <StatusBar>
          <span>Ready</span>
          <StatusTools>
            <ViewButton $on aria-label="Normal view"><Draw w={27} h={27}><path d="M2 2h23v23H2zM10 2v23M17 2v23M2 10h23M2 17h23" stroke="#666" strokeWidth="2" /></Draw></ViewButton>
            <ViewButton aria-label="Page layout view"><Draw w={27} h={27}><path d="M2 2h23v23H2zM7 6h13v15H7zM10 10h7M10 13h7M10 17h7" stroke="#777" strokeWidth="2" /></Draw></ViewButton>
            <ViewButton aria-label="Page break view"><Draw w={27} h={27}><path d="M2 2h23v23H2zM9 2v13h9V2M2 15h7" stroke="#777" strokeWidth="2" /></Draw></ViewButton>
            <ZoomStep aria-label="Zoom out">−</ZoomStep>
            <ZoomRange type="range" aria-label="Zoom" min={0} max={100} defaultValue={67} />
            <ZoomStep aria-label="Zoom in">+</ZoomStep>
            <ZoomValue>190%</ZoomValue>
          </StatusTools>
        </StatusBar>
        <Taskbar>
          <StartButton aria-label="Start"><Draw w={36} h={36}><path d="m2 6 14-2v13H2zM18 3l16-2v16H18zM2 19h14v13L2 30zM18 19h16v16l-16-2z" fill="#fff" /></Draw></StartButton>
          <SearchBox>
            <Draw w={36} h={36}><circle cx="22" cy="14" r="10" stroke="#444" strokeWidth="3" /><path d="M15 21 3 33" stroke="#444" strokeWidth="3" /></Draw>
            <SearchInput aria-label="Search" placeholder="Type here to search" />
          </SearchBox>
          <TaskIcons>
            {taskItems.map((t) => <TaskButton key={t.name} aria-label={t.name} $open={t.open} $on={t.on}>{t.art}</TaskButton>)}
          </TaskIcons>
          <Tray>
            <Weather>
              <Draw w={51} h={48}><path d="M10 45a10 10 0 0 1 0-19c2-13 22-14 25-2 14 0 17 19 4 21z" fill="#c5dcf8" /><circle cx="37" cy="13" r="12" fill="#d42a30" /><path d="M34 10l4-3v12" stroke="#fff" strokeWidth="2" /></Draw>
              <span>25°C</span><span>Mostly cloudy</span>
            </Weather>
            <TrayButton aria-label="Hidden icons"><Draw w={27} h={24}><path d="m4 16 9-9 9 9" stroke="#fff" strokeWidth="3" /></Draw></TrayButton>
            <TrayButton aria-label="Camera"><Draw w={27} h={33}><path d="M3 9h15v15H3zM18 13l6-3v13l-6-3M6 4h10M6 29h10" stroke="#fff" strokeWidth="2" /><circle cx="10" cy="16" r="3" stroke="#fff" strokeWidth="2" /></Draw></TrayButton>
            <TrayButton aria-label="OneDrive"><Draw w={33} h={24}><path d="M7 21a6 6 0 0 1 0-12c4-9 15-8 17 0 9 1 9 12 1 12z" fill="#fff" /></Draw></TrayButton>
            <TrayButton aria-label="Microphone"><Draw w={24} h={36}><rect x="7" y="2" width="11" height="20" rx="4" fill="#fff" /><path d="M3 15c0 15 18 15 18 0M12 26v8" stroke="#fff" strokeWidth="3" /></Draw></TrayButton>
            <TrayButton aria-label="Network"><Draw w={30} h={30}><path d="M3 27C3 14 14 3 27 3M10 27c0-9 8-17 17-17M17 27c0-5 5-10 10-10" stroke="#b9c3cc" strokeWidth="2" /><circle cx="25" cy="25" r="3" fill="#fff" /></Draw></TrayButton>
            <TrayButton aria-label="Volume"><Draw w={36} h={30}><path d="M3 11h5l7-7v22l-7-7H3zM20 10c3 3 3 7 0 10M25 6c5 5 5 13 0 18M30 2c7 8 7 18 0 26" stroke="#fff" strokeWidth="2" /></Draw></TrayButton>
            <TrayText $wide={24}>ENG<br />IN</TrayText>
            <TrayText $wide={46}>10:44<br />29-06-2024</TrayText>
            <NoticeButton aria-label="Notifications"><Draw w={33} h={33}><path d="M3 4h27v21H19l-5 5v-5H3zM9 11h15M9 17h15" stroke="#cfd4da" strokeWidth="2" /></Draw></NoticeButton>
            <Watermark>ûdemy</Watermark>
          </Tray>
        </Taskbar>
      </Shell>
    </>
  );
}
